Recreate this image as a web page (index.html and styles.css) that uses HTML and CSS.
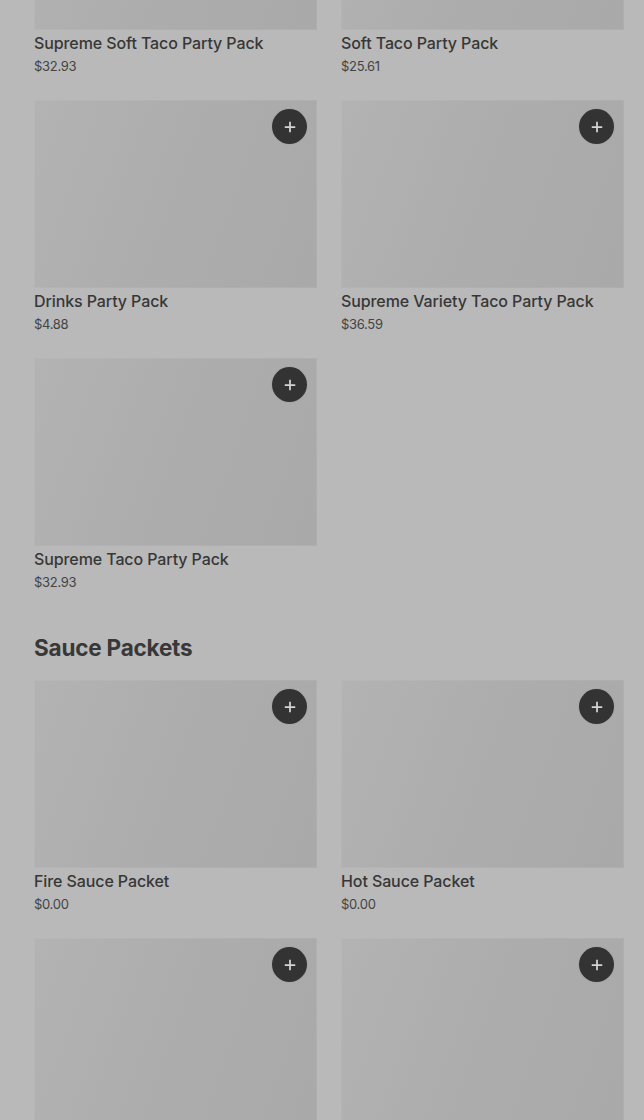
FILE: index.html
```html
<!DOCTYPE html>
<html lang="en">
<head>
<meta charset="utf-8">
<title>Menu</title>
<link rel="stylesheet" href="styles.css">
</head>
<body>
<main class="page">
  <section class="section section-first">
    <div class="grid">
      <div class="card">
        <div class="thumb"><button class="add" aria-label="Add"><svg viewBox="0 0 16 16" width="14" height="14"><path d="M8 2v12M2 8h12" stroke="#d4d4d4" stroke-width="2" fill="none"/></svg></button></div>
        <div class="name">Supreme Soft Taco Party Pack</div>
        <div class="price">$32.93</div>
      </div>
      <div class="card">
        <div class="thumb"><button class="add" aria-label="Add"><svg viewBox="0 0 16 16" width="14" height="14"><path d="M8 2v12M2 8h12" stroke="#d4d4d4" stroke-width="2" fill="none"/></svg></button></div>
        <div class="name">Soft Taco Party Pack</div>
        <div class="price">$25.61</div>
      </div>
      <div class="card">
        <div class="thumb"><button class="add" aria-label="Add"><svg viewBox="0 0 16 16" width="14" height="14"><path d="M8 2v12M2 8h12" stroke="#d4d4d4" stroke-width="2" fill="none"/></svg></button></div>
        <div class="name">Drinks Party Pack</div>
        <div class="price">$4.88</div>
      </div>
      <div class="card">
        <div class="thumb"><button class="add" aria-label="Add"><svg viewBox="0 0 16 16" width="14" height="14"><path d="M8 2v12M2 8h12" stroke="#d4d4d4" stroke-width="2" fill="none"/></svg></button></div>
        <div class="name">Supreme Variety Taco Party Pack</div>
        <div class="price">$36.59</div>
      </div>
      <div class="card">
        <div class="thumb"><button class="add" aria-label="Add"><svg viewBox="0 0 16 16" width="14" height="14"><path d="M8 2v12M2 8h12" stroke="#d4d4d4" stroke-width="2" fill="none"/></svg></button></div>
        <div class="name">Supreme Taco Party Pack</div>
        <div class="price">$32.93</div>
      </div>
    </div>
  </section>
  <section class="section">
    <h2 class="section-title">Sauce Packets</h2>
    <div class="grid">
      <div class="card">
        <div class="thumb"><button class="add" aria-label="Add"><svg viewBox="0 0 16 16" width="14" height="14"><path d="M8 2v12M2 8h12" stroke="#d4d4d4" stroke-width="2" fill="none"/></svg></button></div>
        <div class="name">Fire Sauce Packet</div>
        <div class="price">$0.00</div>
      </div>
      <div class="card">
        <div class="thumb"><button class="add" aria-label="Add"><svg viewBox="0 0 16 16" width="14" height="14"><path d="M8 2v12M2 8h12" stroke="#d4d4d4" stroke-width="2" fill="none"/></svg></button></div>
        <div class="name">Hot Sauce Packet</div>
        <div class="price">$0.00</div>
      </div>
      <div class="card">
        <div class="thumb"><button class="add" aria-label="Add"><svg viewBox="0 0 16 16" width="14" height="14"><path d="M8 2v12M2 8h12" stroke="#d4d4d4" stroke-width="2" fill="none"/></svg></button></div>
      </div>
      <div class="card">
        <div class="thumb"><button class="add" aria-label="Add"><svg viewBox="0 0 16 16" width="14" height="14"><path d="M8 2v12M2 8h12" stroke="#d4d4d4" stroke-width="2" fill="none"/></svg></button></div>
      </div>
    </div>
  </section>
</main>
</body>
</html>
```
FILE: styles.css
```css
html, body {
  margin: 0;
  padding: 0;
  background: #b9b9b9;
  overflow: hidden;
}
body {
  font-family: Inter, "Liberation Sans", sans-serif;
  color: #363636;
}
.page {
  padding: 0 20px 0 34px;
  margin-top: -158px;
}
.grid {
  display: grid;
  grid-template-columns: 283px 283px;
  column-gap: 24px;
  row-gap: 24px;
}
.card {
  display: flex;
  flex-direction: column;
}
.thumb {
  position: relative;
  height: 188px;
  background: linear-gradient(110deg, #b3b3b3 0%, #adadad 45%, #a9a9a9 100%);
  box-shadow: inset 0 0 0 1px rgba(255,255,255,0.06);
}
.add {
  position: absolute;
  top: 8px;
  right: 9px;
  width: 37px;
  height: 37px;
  border-radius: 50%;
  background: #333333;
  border: 1px solid rgba(215,215,215,0.7);
  padding: 0;
  display: flex;
  align-items: center;
  justify-content: center;
  box-sizing: border-box;
}
.add svg { display: block; }
.name {
  margin-top: 3px;
  font-size: 16px;
  line-height: 20px;
  font-weight: 500;
  color: #373737;
  letter-spacing: -0.1px;
}
.price {
  margin-top: 3px;
  font-size: 13px;
  line-height: 20px;
  color: #444;
  letter-spacing: -0.3px;
}
.section-title {
  margin: 41px 0 17px;
  font-size: 22.5px;
  line-height: 30px;
  font-weight: 700;
  color: #383838;
  letter-spacing: -0.2px;
}
```
